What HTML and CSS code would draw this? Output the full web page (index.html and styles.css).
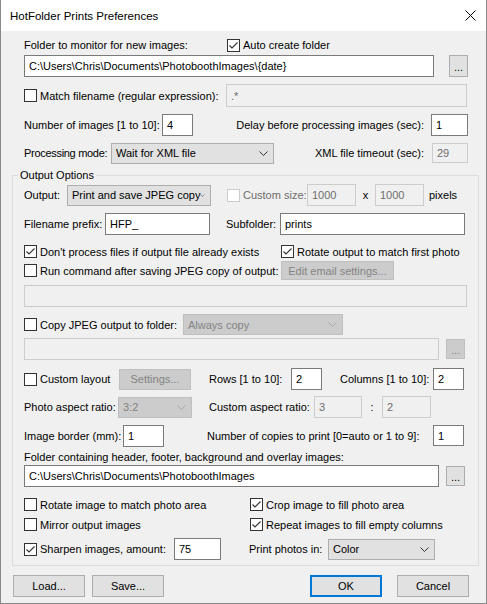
FILE: index.html
```html
<!DOCTYPE html>
<html>
<head>
<meta charset="utf-8">
<title>HotFolder Prints Preferences</title>
<link rel="stylesheet" href="styles.css">
</head>
<body>
<div class="window">
  <div class="titlebar">
    <span class="title">HotFolder Prints Preferences</span>
    <svg class="close" viewBox="0 0 11 11"><path d="M0.5 0.5 L10.5 10.5 M10.5 0.5 L0.5 10.5" stroke="#000" stroke-width="1" fill="none"/></svg>
  </div>

  <div class="main">
    <div class="row h18 mt5">
      <span class="cell w203">Folder to monitor for new images:</span>
      <span class="chk"><span class="box"><svg viewBox="0 0 11 11"><path d="M1.5 5.5 L4 8 L9.5 2.5" class="tick"/></svg></span><span>Auto create folder</span></span>
    </div>
    <div class="row h22 mt1">
      <span class="input w410">C:\Users\Chris\Documents\PhotoboothImages\{date}</span>
      <span class="btn sm w19 ml15">...</span>
    </div>
    <div class="row h23 mt7">
      <span class="cell w202"><span class="chk"><span class="box"></span><span>Match filename (regular expression):</span></span></span>
      <span class="input dis w241 ht23">.*</span>
    </div>
    <div class="row h22 mt7">
      <span class="cell w138">Number of images [1 to 10]:</span>
      <span class="input w31">4</span>
      <span class="cell grow right pr7">Delay before processing images (sec):</span>
      <span class="input w37">1</span>
    </div>
    <div class="row h22 mt6">
      <span class="cell w87 tight">Processing mode:</span>
      <span class="select w163"><span>Wait for XML file</span><svg class="arrow" viewBox="0 0 9 5"><path d="M0.5 0.5 L4.5 4.5 L8.5 0.5"/></svg></span>
      <span class="cell grow right pr8">XML file timeout (sec):</span>
      <span class="input dis w36 ht20">29</span>
    </div>
  </div>

  <fieldset class="group">
    <legend>Output Options</legend>
    <div class="row h22">
      <span class="cell w43">Output:</span>
      <span class="select w144"><span>Print and save JPEG copy</span><svg class="arrow" viewBox="0 0 9 5"><path d="M0.5 0.5 L4.5 4.5 L8.5 0.5"/></svg></span>
      <span class="cell w80 ml16"><span class="chk dis"><span class="box"></span><span>Custom size:</span></span></span>
      <span class="input dis w49">1000</span>
      <span class="cell w19 center">x</span>
      <span class="input dis w49">1000</span>
      <span class="cell ml5">pixels</span>
    </div>
    <div class="row h22 mt7">
      <span class="cell w81">Filename prefix:</span>
      <span class="input w105">HFP_</span>
      <span class="cell w54 ml16">Subfolder:</span>
      <span class="input w185">prints</span>
    </div>
    <div class="row h17 mt8">
      <span class="cell w257"><span class="chk"><span class="box"><svg viewBox="0 0 11 11"><path d="M1.5 5.5 L4 8 L9.5 2.5" class="tick"/></svg></span><span>Don't process files if output file already exists</span></span></span>
      <span class="chk"><span class="box"><svg viewBox="0 0 11 11"><path d="M1.5 5.5 L4 8 L9.5 2.5" class="tick"/></svg></span><span>Rotate output to match first photo</span></span>
    </div>
    <div class="row h19 mt1">
      <span class="cell w257"><span class="chk"><span class="box"></span><span>Run command after saving JPEG copy of output:</span></span></span>
      <span class="btn dis w113 ht19">Edit email settings...</span>
    </div>
    <div class="row h22 mt5">
      <span class="input dis w443"></span>
    </div>
    <div class="row h21 mt7">
      <span class="cell w159"><span class="chk"><span class="box"></span><span>Copy JPEG output to folder:</span></span></span>
      <span class="select dis w160"><span>Always copy</span><svg class="arrow" viewBox="0 0 9 5"><path d="M0.5 0.5 L4.5 4.5 L8.5 0.5"/></svg></span>
    </div>
    <div class="row h22 mt3">
      <span class="input dis w415"></span>
      <span class="btn dis sm w19 ht20 ml7">...</span>
    </div>
    <div class="row h22 mt8">
      <span class="cell w95"><span class="chk"><span class="box"></span><span>Custom layout</span></span></span>
      <span class="btn dis w72 ht21">Settings...</span>
      <span class="cell w82 ml18">Rows [1 to 10]:</span>
      <span class="input w31">2</span>
      <span class="cell w93 ml18">Columns [1 to 10]:</span>
      <span class="input w31">2</span>
    </div>
    <div class="row h24 mt5">
      <span class="cell w94">Photo aspect ratio:</span>
      <span class="select dis w74"><span>3:2</span><svg class="arrow" viewBox="0 0 9 5"><path d="M0.5 0.5 L4.5 4.5 L8.5 0.5"/></svg></span>
      <span class="cell w105 ml17">Custom aspect ratio:</span>
      <span class="input dis w48">3</span>
      <span class="cell w20 center">:</span>
      <span class="input dis w49">2</span>
    </div>
    <div class="row h23 mt5">
      <span class="cell w99">Image border (mm):</span>
      <span class="input w41">1</span>
      <span class="cell w226 ml43">Number of copies to print [0=auto or 1 to 9]:</span>
      <span class="input w31 ht21">1</span>
    </div>
    <div class="row h16 mt2">
      <span class="cell">Folder containing header, footer, background and overlay images:</span>
    </div>
    <div class="row h22">
      <span class="input w415">C:\Users\Chris\Documents\PhotoboothImages</span>
      <span class="btn sm w19 ht20 ml7">...</span>
    </div>
    <div class="row h15 mt10">
      <span class="cell w226"><span class="chk"><span class="box"></span><span>Rotate image to match photo area</span></span></span>
      <span class="chk"><span class="box"><svg viewBox="0 0 11 11"><path d="M1.5 5.5 L4 8 L9.5 2.5" class="tick"/></svg></span><span>Crop image to fill photo area</span></span>
    </div>
    <div class="row h15 mt5">
      <span class="cell w226"><span class="chk"><span class="box"></span><span>Mirror output images</span></span></span>
      <span class="chk"><span class="box"><svg viewBox="0 0 11 11"><path d="M1.5 5.5 L4 8 L9.5 2.5" class="tick"/></svg></span><span>Repeat images to fill empty columns</span></span>
    </div>
    <div class="row h22 mt6">
      <span class="cell w150"><span class="chk"><span class="box"><svg viewBox="0 0 11 11"><path d="M1.5 5.5 L4 8 L9.5 2.5" class="tick"/></svg></span><span>Sharpen images, amount:</span></span></span>
      <span class="input w47">75</span>
      <span class="cell w79 ml28">Print photos in:</span>
      <span class="select w107"><span>Color</span><svg class="arrow" viewBox="0 0 9 5"><path d="M0.5 0.5 L4.5 4.5 L8.5 0.5"/></svg></span>
    </div>
  </fieldset>

  <div class="buttons">
    <span class="btn w72">Load...</span>
    <span class="btn w72 ml7">Save...</span>
    <span class="btn default w72 ml146">OK</span>
    <span class="btn w72 ml15">Cancel</span>
  </div>
</div>
</body>
</html>
```
FILE: styles.css
```css
* { box-sizing: border-box; }
html, body { margin: 0; padding: 0; }
body {
  font-family: "Liberation Sans", Arial, sans-serif;
  font-size: 11px;
  line-height: 16px;
  color: #000;
  background: #ffffff;
}
.window {
  width: 487px;
  height: 604px;
  border: 1px solid #8a8a8a;
  border-top: none;
  background: #f0f0f0;
  display: flex;
  flex-direction: column;
}
.titlebar {
  height: 31px;
  flex: none;
  background: #fff;
  display: flex;
  align-items: center;
  justify-content: space-between;
  padding: 0 10px 0 9px;
}
.title { font-size: 11.5px; }
.close { width: 11px; height: 11px; }

.main { padding: 0 18px 0 23px; }

.group {
  margin: 3px 7px 0 11px;
  padding: 1px 10px 5px 11px;
  border: 1px solid #dcdcdc;
  min-width: 0;
}
.group legend {
  padding: 0 2px;
  margin-left: -6px;
  line-height: 16px;
}

.buttons { display: flex; margin: 9px 0 0 12px; }

.row { display: flex; align-items: center; white-space: nowrap; }
.cell { flex: none; display: flex; align-items: center; }
.grow { flex: 1; }
.right { justify-content: flex-end; }
.center { justify-content: center; }
.tight { letter-spacing: -0.3px; }

.input {
  flex: none;
  height: 22px;
  background: #fff;
  border: 1px solid #7a7a7a;
  padding: 0 4px;
  display: flex;
  align-items: center;
  overflow: hidden;
}
.input.dis { background: #f0f0f0; border-color: #cccccc; color: #6d6d6d; }

.select {
  flex: none;
  height: 21px;
  background: #e1e1e1;
  border: 1px solid #adadad;
  padding: 0 5px 0 4px;
  display: flex;
  align-items: center;
  justify-content: space-between;
}
.select.dis { background: #cccccc; border-color: #bfbfbf; color: #838383; }
.arrow { width: 9px; height: 5px; }
.arrow path { stroke: #333; stroke-width: 1; fill: none; }
.select.dis .arrow path { stroke: #a8a8a8; }

.btn {
  flex: none;
  height: 22px;
  background: #e1e1e1;
  border: 1px solid #adadad;
  display: flex;
  align-items: center;
  justify-content: center;
}
.btn.dis { background: #cccccc; border-color: #bfbfbf; color: #838383; }
.btn.default { border: 2px solid #0078d7; }
.btn.sm { padding-top: 2px; }

.chk { display: flex; align-items: center; gap: 3px; }
.box {
  flex: none;
  width: 13px;
  height: 13px;
  border: 1px solid #333;
  background: #fff;
  display: flex;
}
.box svg { width: 11px; height: 11px; }
.tick { stroke: #333; stroke-width: 1.1; fill: none; }
.chk.dis { color: #6d6d6d; }
.chk.dis .box { border-color: #cccccc; }

/* heights */
.h15 { height: 15px; } .h16 { height: 16px; } .h17 { height: 17px; }
.h18 { height: 18px; } .h19 { height: 19px; } .h21 { height: 21px; }
.h22 { height: 22px; } .h23 { height: 23px; } .h24 { height: 24px; }
.ht19 { height: 19px; } .ht20 { height: 20px; } .ht21 { height: 21px; } .ht23 { height: 23px; }

/* spacing */
.mt1 { margin-top: 1px; } .mt2 { margin-top: 2px; } .mt3 { margin-top: 3px; }
.mt5 { margin-top: 5px; } .mt6 { margin-top: 6px; } .mt7 { margin-top: 7px; }
.mt8 { margin-top: 8px; } .mt10 { margin-top: 10px; }
.ml5 { margin-left: 5px; } .ml7 { margin-left: 7px; } .ml15 { margin-left: 15px; }
.ml16 { margin-left: 16px; } .ml17 { margin-left: 17px; } .ml18 { margin-left: 18px; }
.ml28 { margin-left: 28px; } .ml43 { margin-left: 43px; } .ml146 { margin-left: 146px; }
.pr7 { padding-right: 7px; } .pr8 { padding-right: 8px; }

/* widths */
.w19 { width: 19px; } .w20 { width: 20px; } .w31 { width: 31px; } .w36 { width: 36px; }
.w37 { width: 37px; } .w41 { width: 41px; } .w43 { width: 43px; } .w47 { width: 47px; }
.w48 { width: 48px; } .w49 { width: 49px; } .w54 { width: 54px; } .w72 { width: 72px; }
.w74 { width: 74px; } .w79 { width: 79px; } .w80 { width: 80px; } .w81 { width: 81px; }
.w82 { width: 82px; } .w87 { width: 87px; } .w93 { width: 93px; } .w94 { width: 94px; }
.w95 { width: 95px; } .w99 { width: 99px; } .w105 { width: 105px; } .w107 { width: 107px; }
.w113 { width: 113px; } .w138 { width: 138px; } .w144 { width: 144px; } .w150 { width: 150px; }
.w159 { width: 159px; } .w160 { width: 160px; } .w163 { width: 163px; } .w185 { width: 185px; }
.w202 { width: 202px; } .w203 { width: 203px; } .w226 { width: 226px; } .w241 { width: 241px; }
.w257 { width: 257px; } .w410 { width: 410px; } .w415 { width: 415px; } .w443 { width: 443px; }
```
